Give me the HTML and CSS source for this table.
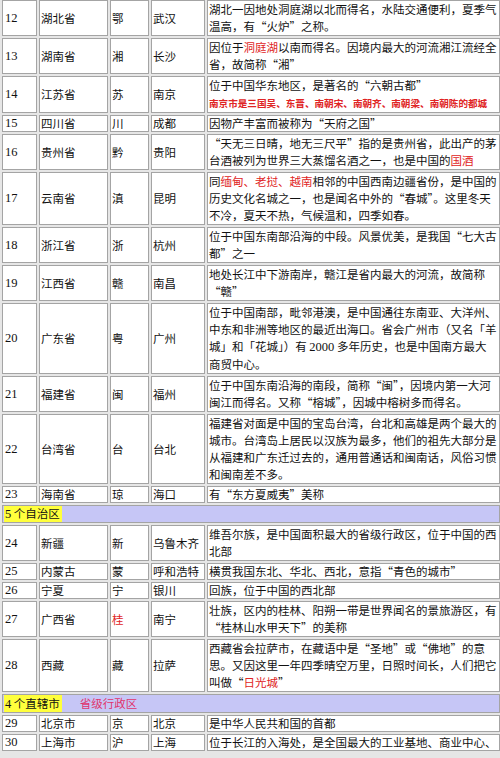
FILE: index.html
```html
<!DOCTYPE html>
<html lang="zh-CN">
<head>
<meta charset="utf-8">
<title>省级行政区</title>
<link rel="stylesheet" href="styles.css">
</head>
<body>
<table class="grid">
<tr><td class="c1">12</td><td class="c2">湖北省</td><td class="c3">鄂</td><td class="c4">武汉</td><td class="c5">湖北一因地处洞庭湖以北而得名，水陆交通便利，夏季气<br>温高，有“火炉”之称。</td></tr>
<tr><td class="c1">13</td><td class="c2">湖南省</td><td class="c3">湘</td><td class="c4">长沙</td><td class="c5">因位于<span class="red">洞庭湖</span>以南而得名。因境内最大的河流湘江流经全<br>省，故简称“湘”</td></tr>
<tr><td class="c1">14</td><td class="c2">江苏省</td><td class="c3">苏</td><td class="c4">南京</td><td class="c5">位于中国华东地区，是著名的“六朝古都”<br><span class="red small">南京市是三国吴、东晋、南朝宋、南朝齐、南朝梁、南朝陈的都城</span></td></tr>
<tr class="one"><td class="c1">15</td><td class="c2">四川省</td><td class="c3">川</td><td class="c4">成都</td><td class="c5">因物产丰富而被称为“天府之国”</td></tr>
<tr><td class="c1">16</td><td class="c2">贵州省</td><td class="c3">黔</td><td class="c4">贵阳</td><td class="c5">“天无三日晴，地无三尺平”指的是贵州省，此出产的茅<br>台酒被列为世界三大蒸馏名酒之一，也是中国的<span class="red">国酒</span></td></tr>
<tr><td class="c1">17</td><td class="c2">云南省</td><td class="c3">滇</td><td class="c4">昆明</td><td class="c5">同<span class="red">缅甸、老挝、越南</span>相邻的中国西南边疆省份，是中国的<br>历史文化名城之一，也是闻名中外的“春城”。这里冬天<br>不冷，夏天不热，气候温和，四季如春。</td></tr>
<tr><td class="c1">18</td><td class="c2">浙江省</td><td class="c3">浙</td><td class="c4">杭州</td><td class="c5">位于中国东南部沿海的中段。风景优美，是我国“七大古<br>都”之一</td></tr>
<tr><td class="c1">19</td><td class="c2">江西省</td><td class="c3">赣</td><td class="c4">南昌</td><td class="c5">地处长江中下游南岸，赣江是省内最大的河流，故简称<br>“赣”</td></tr>
<tr><td class="c1">20</td><td class="c2">广东省</td><td class="c3">粤</td><td class="c4">广州</td><td class="c5">位于中国南部，毗邻港澳，是中国通往东南亚、大洋州、<br>中东和非洲等地区的最近出海口。省会广州市（又名「羊<br>城」和「花城」）有 <span class="num">2000</span> 多年历史，也是中国南方最大<br>商贸中心。</td></tr>
<tr><td class="c1">21</td><td class="c2">福建省</td><td class="c3">闽</td><td class="c4">福州</td><td class="c5">位于中国东南沿海的南段，简称“闽”，因境内第一大河<br>闽江而得名。又称“榕城”，因城中榕树多而得名。</td></tr>
<tr><td class="c1">22</td><td class="c2">台湾省</td><td class="c3">台</td><td class="c4">台北</td><td class="c5">福建省对面是中国的宝岛台湾，台北和高雄是两个最大的<br>城市。台湾岛上居民以汉族为最多，他们的祖先大部分是<br>从福建和广东迁过去的，通用普通话和闽南话，风俗习惯<br>和闽南差不多。</td></tr>
<tr class="one"><td class="c1">23</td><td class="c2">海南省</td><td class="c3">琼</td><td class="c4">海口</td><td class="c5">有“东方夏威夷”美称</td></tr>
<tr class="one sec"><td colspan="5"><span class="tag"><span class="num">5</span> 个自治区</span></td></tr>
<tr><td class="c1">24</td><td class="c2">新疆</td><td class="c3">新</td><td class="c4">乌鲁木齐</td><td class="c5">维吾尔族，是中国面积最大的省级行政区，位于中国的西<br>北部</td></tr>
<tr class="one"><td class="c1">25</td><td class="c2">内蒙古</td><td class="c3">蒙</td><td class="c4">呼和浩特</td><td class="c5">横贯我国东北、华北、西北，意指“青色的城市”</td></tr>
<tr class="one"><td class="c1">26</td><td class="c2">宁夏</td><td class="c3">宁</td><td class="c4">银川</td><td class="c5">回族，位于中国的西北部</td></tr>
<tr><td class="c1">27</td><td class="c2">广西省</td><td class="c3"><span class="red">桂</span></td><td class="c4">南宁</td><td class="c5">壮族，区内的桂林、阳朔一带是世界闻名的景旅游区，有<br>“桂林山水甲天下”的美称</td></tr>
<tr><td class="c1">28</td><td class="c2">西藏</td><td class="c3">藏</td><td class="c4">拉萨</td><td class="c5">西藏省会拉萨市，在藏语中是“圣地”或“佛地”的意<br>思。又因这里一年四季晴空万里，日照时间长，人们把它<br>叫做“<span class="red">日光城</span>”</td></tr>
<tr class="one sec tall"><td colspan="5"><span class="tag"><span class="num">4</span> 个直辖市</span><span class="pink">省级行政区</span></td></tr>
<tr class="one"><td class="c1">29</td><td class="c2">北京市</td><td class="c3">京</td><td class="c4">北京</td><td class="c5">是中华人民共和国的首都</td></tr>
<tr class="one"><td class="c1">30</td><td class="c2">上海市</td><td class="c3">沪</td><td class="c4">上海</td><td class="c5">位于长江的入海处，是全国最大的工业基地、商业中心、</td></tr>
</table>
</body>
</html>
```

FILE: styles.css
```css
html, body {
  margin: 0;
  padding: 0;
  background: #e6e6e6;
  overflow: hidden;
}
.grid {
  margin-top: -2px;
  width: 500px;
  table-layout: fixed;
  border-collapse: separate;
  border-spacing: 2px;
  background: #e6e6e6;
  font-family: "Noto Sans CJK SC", "Liberation Serif", sans-serif;
  font-size: 11.5px;
  color: #111;
}
.grid td {
  box-sizing: border-box;
  background: #fff;
  border: 1px solid #a4a4a4;
  padding: 0 0 0 1px;
  line-height: 17px;
  vertical-align: middle;
  white-space: nowrap;
  overflow: hidden;
}
.grid tr.one td {
  line-height: 15px;
}
.grid tr.tall td {
  line-height: 16px;
}
.c1 { width: 35px; }
.c2 { width: 69px; }
.c3 { width: 39px; }
.c4 { width: 54px; }
.c5 { width: 293px; }
.grid td.c1, .num {
  font-family: "Liberation Serif", serif;
  font-size: 12.5px;
}
.grid td.c1 { padding-left: 2px; }
.red { color: #e02424; }
.small {
  font-size: 9.6px;
  font-weight: bold;
}
.grid tr.sec td {
  background: #c6c6f6;
  padding-left: 1px;
}
.tag {
  display: inline-block;
  background: #ffff3c;
  padding: 0 2px 0 1px;
}
.pink {
  color: #e0346c;
  margin-left: 18px;
}
```
